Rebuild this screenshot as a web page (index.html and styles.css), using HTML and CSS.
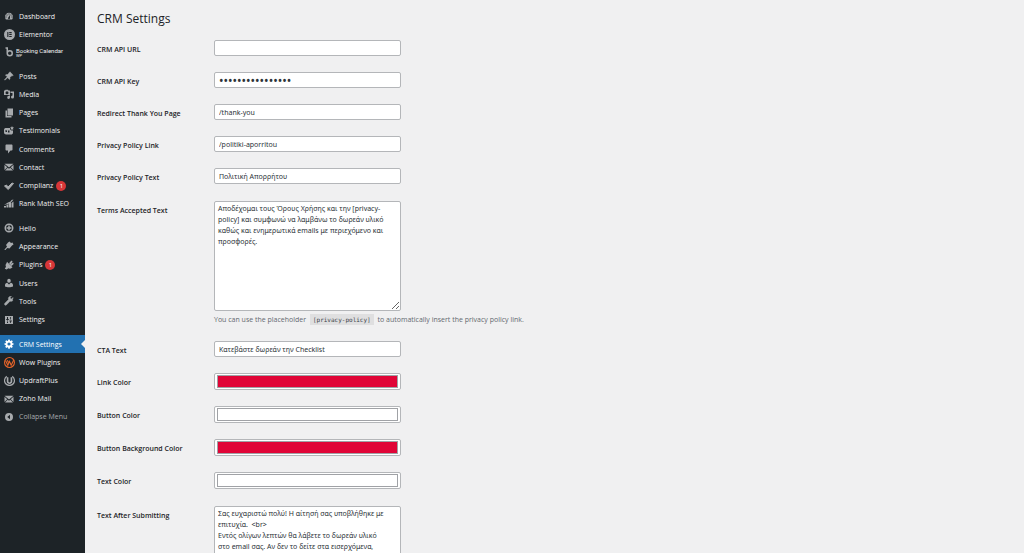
FILE: index.html
```html
<!DOCTYPE html>
<html lang="en">
<head>
<meta charset="utf-8">
<title>CRM Settings</title>
<link rel="stylesheet" href="styles.css">
</head>
<body>
<div class="layout">
<nav class="sidebar" aria-label="Main menu">
  <ul class="menu menu-top">
    <li><a class="item" href="#"><svg class="icon" viewBox="0 0 20 20"><path fill-rule="evenodd" d="M3.800 17h12.400c1.100-1.500 1.800-3.300 1.800-5.300C18 7 14.400 3.500 10 3.500S2 7 2 11.700c0 2 .7 3.800 1.800 5.300zM9 5h2v2H9zM5 7h2v2H5zm8 0h2v2h-2zM3 11h2v2H3zm12 0h2v2h-2zM8 14l4-6 0 6c0 3-4 3-4 0z"/></svg>Dashboard</a></li>
    <li><a class="item" href="#"><svg class="icon icon-full" viewBox="0 0 20 20"><path fill-rule="evenodd" d="M10 0a10 10 0 1 0 0 20a10 10 0 0 0 0-20zM6 5.500h2v9H6zM9.500 5.500H14v2H9.500zM9.500 9H14v2H9.500zM9.500 12.500H14v2H9.500z"/></svg>Elementor</a></li>
    <li><a class="item item-small" href="#"><svg class="icon" viewBox="0 0 20 20"><path fill="none" stroke="currentColor" stroke-width="3" d="M3 2h3.500v11M6.500 12.500a5 5 0 1 1 5 5C8 17.500 6.500 16 6.500 12.500z"/></svg><span class="booking">Booking Calendar<span class="sub">WP</span></span></a></li>
  </ul>
  <ul class="menu menu-content">
    <li><a class="item" href="#"><svg class="icon" viewBox="0 0 20 20"><path d="M10.400 3l1.400-1.400 6.700 6.700-1.400 1.400c-.8-.2-1.600-.1-2.300.3l-3 3c.6 1.500.3 3-.8 4.200l-3.700-3.700L2 18.200 1 18l.5-1.200 4.900-5.200L2.800 8c1.200-1.100 2.800-1.400 4.200-.8l3-3c.4-.4.500-.8.4-1.200z" stroke="currentColor"/></svg>Posts</a></li>
    <li><a class="item" href="#"><svg class="icon" viewBox="0 0 20 20"><path fill-rule="evenodd" d="M0 3h2l1-1.500h5L9 3h3v9H0zM6 4.500a3 3 0 1 0 0 6a3 3 0 0 0 0-6z"/><path d="M13 5h7v11a3 3 0 1 1-3-3V8h-4zM9.500 13H12v4a2.800 2.800 0 1 1-2.500-2.800z"/></svg>Media</a></li>
    <li><a class="item" href="#"><svg class="icon" viewBox="0 0 20 20"><path d="M7 1h11v14H7zM3 5h3v11h9v3H3z"/></svg>Pages</a></li>
    <li><a class="item" href="#"><svg class="icon" viewBox="0 0 20 20"><path fill-rule="evenodd" d="M3 4h9v3l3 2h3v4c0 3-2 4-4 4H4c-2 0-4-2-4-4V8c0-2 1-4 3-4zM3 8v4h3V9zm5 1v4h3V9z"/><path d="M16 0l1.200 2.600L20 3l-2 2 .5 3L16 6.600 13.500 8l.5-3-2-2 2.800-.4z"/></svg>Testimonials</a></li>
    <li><a class="item" href="#"><svg class="icon" viewBox="0 0 20 20"><path d="M5 1h10c1.100 0 2 .9 2 2v8c0 1.100-.9 2-2 2h-2l-5 6v-6H5c-1.100 0-2-.9-2-2V3c0-1.100.9-2 2-2z"/></svg>Comments</a></li>
    <li><a class="item" href="#"><svg class="icon" viewBox="0 0 20 20"><path d="M1 3.500h18l-9 7.500zM1 5.500l5.500 5L1 16zM19 5.500l-5.500 5L19 16zM7.500 11.300L10 13.400l2.500-2.100L18 17H2z"/></svg>Contact</a></li>
    <li><a class="item" href="#"><svg class="icon" viewBox="0 0 20 20"><path d="M1 10l4-2 3 4 8-8 3 1L8.500 17z" stroke="currentColor" stroke-width="2"/></svg>Complianz<span class="badge">1</span></a></li>
    <li><a class="item" href="#"><svg class="icon" viewBox="0 0 20 20"><path d="M0 14h4v3H0zM5 12l4-2v7H5zM10 9l4-2v10h-4zM15 8l4-3v12h-4zM0 12l8-5 5-2 2-3 4-1-3 4-5 4z"/></svg>Rank Math SEO</a></li>
  </ul>
  <ul class="menu menu-tools">
    <li><a class="item" href="#"><svg class="icon" viewBox="0 0 20 20"><path fill-rule="evenodd" d="M10 1a9 9 0 1 0 0 18a9 9 0 0 0 0-18zM10 4a6 6 0 1 1 0 12a6 6 0 0 1 0-12z"/><path d="M8.500 5h3v3.500H15v3h-3.500V15h-3v-3.500H5v-3h3.500z"/></svg>Hello</a></li>
    <li><a class="item" href="#"><svg class="icon" viewBox="0 0 20 20"><path d="M11 1l3 3 3-1 2 4-3 2-5 6-4-1c-2 1-3 3-4 4-1 .6-2.400-.4-1.800-1.400C2.500 15 5 13.500 6 11L4 8l4-5z"/></svg>Appearance</a></li>
    <li><a class="item" href="#"><svg class="icon" viewBox="0 0 20 20"><path d="M13 9.500L10 6.500l4-4.500c.7-.7 2-.7 2.600 0 .6.700.4 1.500-.3 2.400zM6 3.500l11 11-1.200 1c-2 2-5 2.300-7.200 1.200L5.500 19 1.500 17.500l2.500-4C2.600 11 3 8.500 5 6.500zM15 12l-2.500-2.500 4-3.500c.8-.7 1.700-.5 2.300 0 .6.700.6 1.700 0 2.400z"/></svg>Plugins<span class="badge">1</span></a></li>
    <li><a class="item" href="#"><svg class="icon" viewBox="0 0 20 20"><path d="M10 9.500c-2.300 0-3.500-2-3.500-4C6.500 3 8 1.500 10 1.500S13.500 3 13.500 5.500c0 2-1.200 4-3.500 4zM6.500 9.500L10 13l3.500-3.500C16 10 18 11.500 18 14v3c-4 2-12 2-16 0v-3c0-2.500 2-4 4.500-4.500z"/></svg>Users</a></li>
    <li><a class="item" href="#"><svg class="icon" viewBox="0 0 20 20"><path d="M17 6.500c1-1 1.200-2.300.9-3.500L15 5.900l-2-.8-.6-1.900L15 .6c-1.700-.5-3.500-.1-4.800 1.200C8.700 3.200 8.400 5.300 9.100 7L1.600 14.700c-.9.900-.9 2.200 0 3.100s2.200.9 3.100 0L12 10.300c1.800.8 4 .4 5.400-1z" stroke="currentColor"/></svg>Tools</a></li>
    <li><a class="item" href="#"><svg class="icon" viewBox="0 0 20 20"><path fill-rule="evenodd" d="M2 2h16v16H2zM6 4v4H4.500v2H6v1h2v-1h1.500V8H8V4zM6 13v3h2v-3zM12.500 4v5H14V4zM11 11v2h1.500v3H14v-3h1.500v-2z"/></svg>Settings</a></li>
  </ul>
  <ul class="menu menu-plugins">
    <li><a class="item current" href="#" aria-current="page"><svg class="icon" viewBox="0 0 20 20"><path fill-rule="evenodd" d="M8.500 1h3l.5 2.500 1.400.6 2.200-1.500 2 2.100-1.500 2.100.7 1.500 2.200.4v3l-2.300.4-.6 1.500 1.500 2.100-2.100 2.100-2.100-1.500-1.400.6-.5 2.500h-3l-.4-2.500-1.500-.6-2.100 1.500-2.100-2.100 1.500-2.100-.6-1.500L1 11.700v-3l2.400-.4.600-1.500-1.500-2.100 2.100-2.100 2.100 1.500L8 3.500zM10 6.800a3.200 3.200 0 1 0 0 6.400a3.200 3.200 0 0 0 0-6.400z"/></svg>CRM Settings</a></li>
    <li><a class="item" href="#"><svg class="icon icon-full icon-wow" viewBox="0 0 20 20"><g fill="none" stroke="currentColor" stroke-width="2"><circle cx="10" cy="10" r="9"/><path d="M3 7l4 8 3-7 3 7 5-10M6 6l2 4"/></g></svg>Wow Plugins</a></li>
    <li><a class="item" href="#"><svg class="icon icon-full" viewBox="0 0 20 20"><path fill="none" stroke="currentColor" stroke-width="2.200" d="M5 2.500a9 9 0 1 0 10 0"/><path d="M5 4h3v8c0 2 4 2 4 0V4h3v8c0 6-10 6-10 0z"/></svg>UpdraftPlus</a></li>
    <li><a class="item" href="#"><svg class="icon" viewBox="0 0 20 20"><path d="M1 3.500h18l-9 7.500zM1 5.500l5.500 5L1 16zM19 5.500l-5.500 5L19 16zM7.500 11.300L10 13.400l2.500-2.100L18 17H2z"/></svg>Zoho Mail</a></li>
    <li><button class="item collapse" type="button"><svg class="icon" viewBox="0 0 20 20"><path fill-rule="evenodd" d="M10 2a8 8 0 1 0 0 16a8 8 0 0 0 0-16zM12 5.500v9L6.500 10z"/></svg>Collapse Menu</button></li>
  </ul>
</nav>
<main class="content">
  <h1 class="title">CRM Settings</h1>
  <form class="form">
    <div class="row"><label for="url">CRM API URL</label><input class="text" id="url" type="text"></div>
    <div class="row"><label for="key">CRM API Key</label><input class="text secret" id="key" type="password" value="abcdefghijklmnop"></div>
    <div class="row"><label for="redirect">Redirect Thank You Page</label><input class="text" id="redirect" type="text" value="/thank-you"></div>
    <div class="row"><label for="plink">Privacy Policy Link</label><input class="text" id="plink" type="text" value="/politiki-aporritou"></div>
    <div class="row"><label for="ptext">Privacy Policy Text</label><input class="text" id="ptext" type="text" value="Πολιτική Απορρήτου"></div>
    <div class="row row-area"><label for="terms">Terms Accepted Text</label>
      <div class="field">
        <textarea class="area" id="terms">Αποδέχομαι τους Όρους Χρήσης και την [privacy-policy] και συμφωνώ να λαμβάνω το δωρεάν υλικό καθώς και ενημερωτικά emails με περιεχόμενο και προσφορές.</textarea>
        <p class="hint">You can use the placeholder <code>[privacy-policy]</code> to automatically insert the privacy policy link.</p>
      </div>
    </div>
    <div class="row"><label for="cta">CTA Text</label><input class="text" id="cta" type="text" value="Κατεβάστε δωρεάν την Checklist"></div>
    <div class="row"><label for="c1">Link Color</label><input class="color" id="c1" type="color" value="#e00537"></div>
    <div class="row"><label for="c2">Button Color</label><input class="color" id="c2" type="color" value="#ffffff"></div>
    <div class="row"><label for="c3">Button Background Color</label><input class="color" id="c3" type="color" value="#e00537"></div>
    <div class="row"><label for="c4">Text Color</label><input class="color" id="c4" type="color" value="#ffffff"></div>
    <div class="row row-area"><label for="after">Text After Submitting</label>
      <div class="field"><textarea class="area" id="after">Σας ευχαριστώ πολύ! Η αίτησή σας υποβλήθηκε με επιτυχία.  &lt;br&gt;
Εντός ολίγων λεπτών θα λάβετε το δωρεάν υλικό στο email σας. Αν δεν το δείτε στα εισερχόμενα,</textarea></div>
    </div>
  </form>
</main>
</div>
</body>
</html>
```
FILE: styles.css
```css
* { box-sizing: border-box; }
body {
  margin: 0;
  background: #f0f0f1;
  color: #3c434a;
  font: 7px/11px "Open Sans", "Noto Sans", sans-serif;
}
.layout { display: flex; height: 100vh; overflow: hidden; }

.sidebar {
  flex: 0 0 85px;
  display: flex;
  flex-direction: column;
  gap: 6px;
  padding-top: 7px;
  background: #1d2327;
}
.menu { display: grid; grid-auto-rows: 1fr; margin: 0; padding: 0; list-style: none; }
.menu-top { height: 54px; }
.menu-content { height: 146px; }
.menu-tools { height: 110px; }
.menu-plugins { height: 91px; }
.item {
  position: relative;
  display: flex;
  align-items: center;
  width: 100%;
  height: 100%;
  padding: 0 0 0 4px;
  border: 0;
  background: none;
  color: #f0f0f1;
  font: inherit;
  text-align: left;
  text-decoration: none;
  white-space: nowrap;
}
.icon { flex: none; width: 10px; height: 10px; margin-right: 5px; color: #a7aaad; fill: currentColor; }
.icon-full { width: 11px; height: 11px; margin-right: 4px; }
.icon-wow { color: #e8652a; }
.item-small .icon { margin-right: 2px; }
.booking { font: 6px/6px Roboto, sans-serif; }
.sub { display: block; font-size: 4px; line-height: 3px; }
.badge {
  width: 10px;
  height: 10px;
  margin-left: 3px;
  border-radius: 50%;
  background: #d63638;
  color: #fff;
  font-size: 6px;
  line-height: 10px;
  text-align: center;
}
.current { background: #2271b1; color: #fff; }
.current .icon { color: #fff; }
.current::after {
  content: "";
  position: absolute;
  right: 0;
  top: 5px;
  border: 4px solid transparent;
  border-left-width: 0;
  border-right-color: #f0f0f1;
}
.collapse { color: #a7aaad; }

.content { flex: 1; min-width: 0; padding: 11px 12px 0; overflow: hidden; }
.title { margin: 0 0 13px; color: #1d2327; font-size: 12px; line-height: 16px; font-weight: 400; }
.form { display: grid; gap: 16px; }
.row { display: grid; grid-template-columns: 117px 1fr; align-items: center; }
.row label { padding-top: 2px; color: #1d2327; font-weight: 600; }
.row-area { align-items: start; padding-top: 1px; }
.row-area label { padding-top: 4px; }
.text, .area, .color {
  display: block;
  width: 187px;
  margin: 0;
  border: 1px solid #b4b6b9;
  border-radius: 2px;
  background: #fff;
  color: #2c3338;
  font: 7px/11px "Noto Sans", "Open Sans", sans-serif;
}
.text { height: 16px; padding: 0 4px; }
.secret { font-size: 12px; }
.area { height: 110px; padding: 1px 12px 1px 3px; overflow: hidden; resize: both; }
.color { height: 17px; padding: 1px 2px; }
.color::-webkit-color-swatch-wrapper { padding: 0; }
.color::-webkit-color-swatch { border: 1px solid #a0a2a6; border-radius: 0; }
.hint { margin: 4px 0 0; color: #646970; line-height: 10px; }
.hint code {
  margin: 0 2px;
  padding: 2px 3px;
  background: #dfdfe0;
  color: #3c434a;
  font-family: "DejaVu Sans Mono", monospace;
  font-size: 6px;
}
```
